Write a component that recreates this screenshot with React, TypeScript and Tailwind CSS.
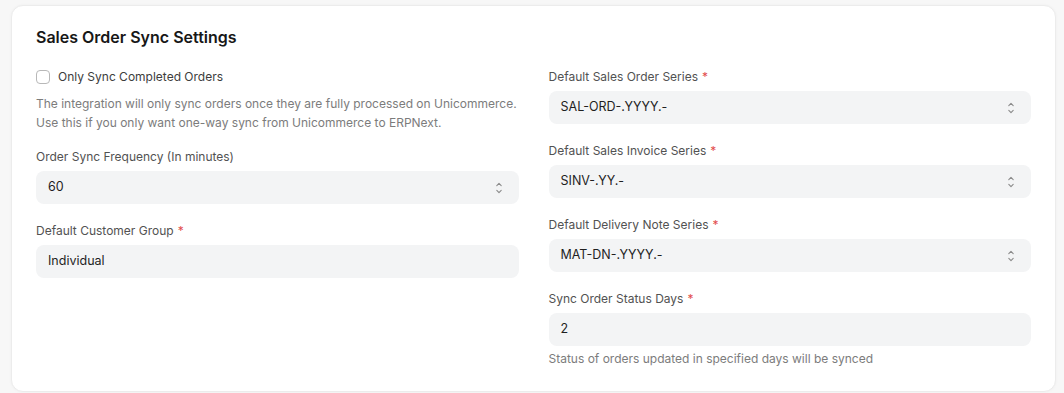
import { ReactNode } from "react";

const font = { fontFamily: "Inter, 'Noto Sans', sans-serif" };

function SelectIcon() {
  return (
    <svg width="8" height="14" viewBox="0 0 8 14" fill="none" className="shrink-0">
      <path d="M1.8 4.6L4 2.4L6.2 4.6" stroke="#8a8a8a" strokeWidth="1.1" strokeLinecap="round" strokeLinejoin="round" />
      <path d="M1.8 9.4L4 11.6L6.2 9.4" stroke="#8a8a8a" strokeWidth="1.1" strokeLinecap="round" strokeLinejoin="round" />
    </svg>
  );
}

function Field({
  label,
  value,
  required,
  select,
  help,
}: {
  label: string;
  value: string;
  required?: boolean;
  select?: boolean;
  help?: ReactNode;
}) {
  return (
    <div className="mb-[18px]">
      <div className="mb-[5px] text-[12px] leading-[18px] text-[#525252]">
        {label}
        {required && <span className="ml-1 text-[#e24c4c]">*</span>}
      </div>
      <div className="flex h-[33px] items-center justify-between rounded-lg bg-[#f3f4f5] pl-3 pr-4">
        <span className="text-[12.5px] text-[#1f1f1f]">{value}</span>
        {select && <SelectIcon />}
      </div>
      {help && (
        <div className="mt-[4px] text-[12px] leading-[18px] text-[#7c7c7c]">{help}</div>
      )}
    </div>
  );
}

export default function App() {
  return (
    <div className="h-[393px] overflow-hidden bg-[#f7f7f7] pl-[11px] pt-[5px]" style={font}>
      <div className="h-[387px] w-[1045px] rounded-xl border border-[#ececec] bg-white px-[24px] pt-[19px] shadow-[0_0_3px_rgba(0,0,0,0.04)]">
        <h2 className="text-[16px] font-semibold leading-6 text-[#171717]">
          Sales Order Sync Settings
        </h2>

        <div className="mt-[19px] grid grid-cols-2 gap-x-[30px]">
          {/* left column */}
          <div>
            <label className="flex h-[18px] items-center gap-2 text-[12px] text-[#3d3d3d]">
              <span className="block h-[14px] w-[14px] rounded-[4px] border border-[#b8b8b8] bg-white" />
              Only Sync Completed Orders
            </label>
            <p className="mt-[8px] whitespace-nowrap text-[12px] leading-[19px] text-[#7c7c7c]">
              The integration will only sync orders once they are fully processed on Unicommerce.
              <br />
              Use this if you only want one-way sync from Unicommerce to ERPNext.
            </p>
            <div className="mt-[16px]">
              <Field label="Order Sync Frequency (In minutes)" value="60" select />
              <Field label="Default Customer Group" value="Individual" required />
            </div>
          </div>

          {/* right column */}
          <div>
            <Field label="Default Sales Order Series" value="SAL-ORD-.YYYY.-" required select />
            <Field label="Default Sales Invoice Series" value="SINV-.YY.-" required select />
            <Field label="Default Delivery Note Series" value="MAT-DN-.YYYY.-" required select />
            <Field
              label="Sync Order Status Days"
              value="2"
              required
              help="Status of orders updated in specified days will be synced"
            />
          </div>
        </div>
      </div>
    </div>
  );
}
